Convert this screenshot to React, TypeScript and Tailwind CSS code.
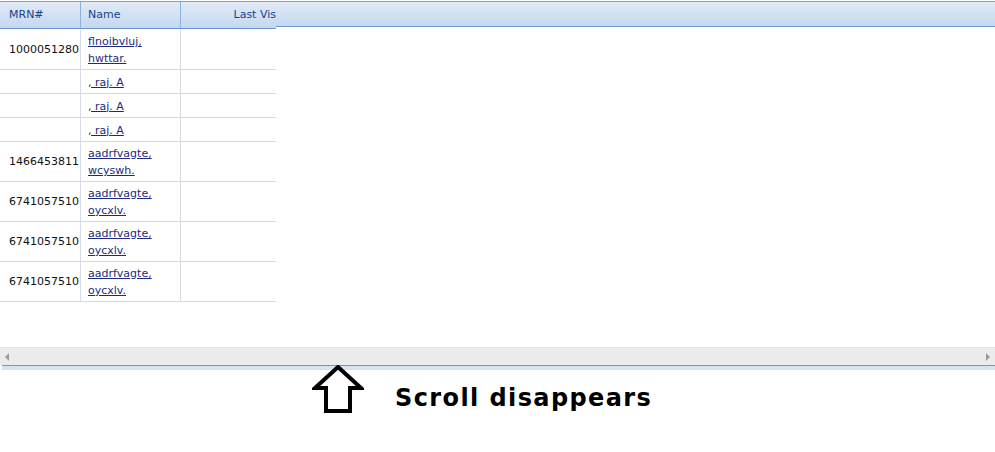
type Row = { mrn: string; name: string[]; tall: boolean };

const rows: Row[] = [
  { mrn: "1000051280", name: ["flnoibvluj,", "hwttar."], tall: true },
  { mrn: "", name: [", raj. A"], tall: false },
  { mrn: "", name: [", raj. A"], tall: false },
  { mrn: "", name: [", raj. A"], tall: false },
  { mrn: "1466453811", name: ["aadrfvagte,", "wcyswh."], tall: true },
  { mrn: "6741057510", name: ["aadrfvagte,", "oycxlv."], tall: true },
  { mrn: "6741057510", name: ["aadrfvagte,", "oycxlv."], tall: true },
  { mrn: "6741057510", name: ["aadrfvagte,", "oycxlv."], tall: true },
];

const headBg = "bg-gradient-to-b from-[#e1eaf7] to-[#c4d8f0]";

export default function App() {
  return (
    <div
      className="w-[995px] h-[452px] bg-white overflow-hidden text-[11px] leading-[16px]"
      style={{ fontFamily: '"DejaVu Sans", Verdana, sans-serif' }}
    >
      {/* grid */}
      <div className="mt-[1px] border-t border-[#7f9fd2] h-[346px] flex flex-col">
        <div className="flex items-start">
          <div className={`w-[276px] h-[27px] flex border-b border-[#6f93cc] overflow-hidden ${headBg}`}>
            <div className="w-[81px] shrink-0 border-r border-[#8fb1e0] pl-[9px] flex items-center text-[#15428b]">
              MRN#
            </div>
            <div className="w-[100px] shrink-0 border-r border-[#8fb1e0] pl-[7px] flex items-center text-[#15428b]">
              Name
            </div>
            <div className="flex-1 flex items-center justify-end text-[#15428b] whitespace-nowrap">
              Last Vis
            </div>
          </div>
          <div className={`flex-1 h-[25px] border-b border-[#6f93cc] ${headBg}`} />
        </div>

        <div className="w-[276px] mt-[1px]">
          {rows.map((r, i) => (
            <div
              key={i}
              className={`flex border-b border-[#d4dbe7] ${r.tall ? "h-[40px]" : "h-[24px]"}`}
            >
              <div className="w-[81px] shrink-0 border-r border-[#d4dbe7] pl-[9px] flex items-center overflow-hidden whitespace-nowrap text-[#111]">
                {r.mrn}
              </div>
              <div className="w-[100px] shrink-0 border-r border-[#d4dbe7] pl-[7px] pt-[1px] flex flex-col justify-center leading-[17px]">
                {r.name.map((n, j) => (
                  <a key={j} href="#" className="text-[#1d2a82] underline whitespace-nowrap">
                    {n}
                  </a>
                ))}
              </div>
              <div className="flex-1" />
            </div>
          ))}
        </div>
      </div>

      {/* horizontal scrollbar */}
      <div className="h-[18px] bg-[#ececec] border-t border-[#e2e2e2] flex items-center justify-between px-[5px]">
        <svg width="5" height="8" viewBox="0 0 5 8">
          <polygon points="4,0 4,8 0,4" fill="#9a9a9a" />
        </svg>
        <svg width="5" height="8" viewBox="0 0 5 8">
          <polygon points="1,0 1,8 5,4" fill="#9a9a9a" />
        </svg>
      </div>
      <div className="ml-[2px] h-[5px] border-t border-[#7396cd] bg-[#d6e3f4]" />

      {/* annotation */}
      <div className="flex items-start pl-[312px] -mt-[5px]">
        <svg width="52" height="49" viewBox="0 0 52 49" className="shrink-0">
          <polygon
            points="26,2 49,23 38,23 38,46 14,46 14,23 3,23"
            fill="white"
            stroke="black"
            strokeWidth="4"
            strokeLinejoin="miter"
          />
        </svg>
        <div
          className="ml-[31px] mt-[18px] text-[24px] leading-[30px] font-bold tracking-[1.4px] text-black whitespace-nowrap"
          style={{ fontFamily: '"DejaVu Sans", Verdana, sans-serif' }}
        >
          Scroll disappears
        </div>
      </div>
    </div>
  );
}
